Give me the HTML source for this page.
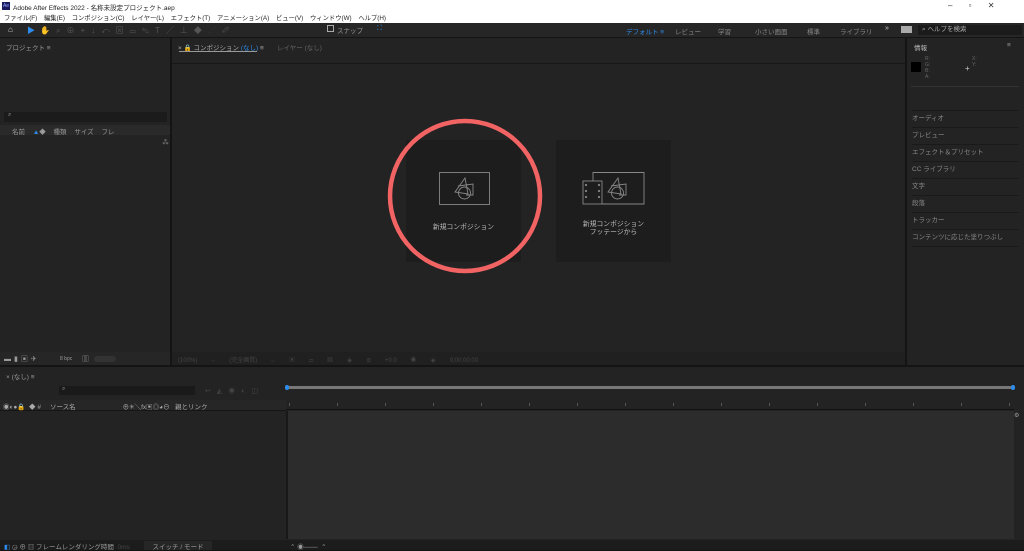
<!DOCTYPE html>
<html><head><meta charset="utf-8"><style>
*{margin:0;padding:0;box-sizing:border-box}
body{width:1024px;height:550px;overflow:hidden;background:#141414;font-family:"Liberation Sans","Noto Sans CJK JP",sans-serif;font-size:7px;color:#9a9a9a;position:relative}
.a{position:absolute}
.p{position:absolute;background:#232323}
</style></head><body>
<div class="a" style="left:0;top:0;width:1024px;height:23px;background:#fff"></div>
<div class="a" style="left:2px;top:2px;width:8px;height:8px;background:#1a1a5e;color:#9af;font-size:5px;line-height:8px;text-align:center">Ae</div>
<div class="a" style="left:13px;top:2px;color:#222;font-size:6.5px">Adobe After Effects 2022 - 名称未設定プロジェクト.aep</div>
<div class="a" style="left:4px;top:13px;color:#222;font-size:6.3px;word-spacing:5px">ファイル(F) 編集(E) コンポジション(C) レイヤー(L) エフェクト(T) アニメーション(A) ビュー(V) ウィンドウ(W) ヘルプ(H)</div>
<div class="a" style="left:948px;top:1px;color:#333;font-size:8px;word-spacing:14px">–  ▫  ✕</div>
<div class="a" style="left:0;top:23px;width:1024px;height:14px;background:#262626"></div>
<div class="a" style="left:8px;top:25px;color:#ccc;font-size:8px">⌂</div>
<div class="a" style="left:27px;top:25px;color:#2d8ceb;font-size:8px">▶</div>
<div class="a" style="left:40px;top:25px;color:#555;font-size:8px;letter-spacing:6px">✋⌕⊕+↓↶⊠▭✎T╱⊥◆⋰✐</div>
<div class="a" style="left:327px;top:25px;width:7px;height:7px;border:1px solid #aaa"></div>
<div class="a" style="left:337px;top:25px;color:#999;font-size:6.5px">スナップ</div>
<div class="a" style="left:377px;top:25px;color:#2d8ceb;font-size:7px">⛶</div>
<div class="a" style="left:626px;top:26px;color:#2d8ceb;font-size:6.5px">デフォルト ≡</div>
<div class="a" style="left:675px;top:26px;font-size:6.5px;color:#888">レビュー</div>
<div class="a" style="left:718px;top:26px;font-size:6.5px;color:#888">学習</div>
<div class="a" style="left:755px;top:26px;font-size:6.5px;color:#888">小さい画面</div>
<div class="a" style="left:807px;top:26px;font-size:6.5px;color:#888">標準</div>
<div class="a" style="left:840px;top:26px;font-size:6.5px;color:#888">ライブラリ</div>
<div class="a" style="left:885px;top:25px;font-size:7px;color:#ccc">»</div>
<div class="a" style="left:901px;top:26px;width:11px;height:7px;background:#aaa"></div>
<div class="a" style="left:918px;top:25px;width:104px;height:10px;background:#1b1b1b;color:#aaa;font-size:6.5px;padding-left:4px;line-height:10px">⌕ ヘルプを検索</div>
<!-- project -->
<div class="p" style="left:0;top:38px;width:170px;height:327px"></div>
<div class="a" style="left:6px;top:42px;font-size:6.5px">プロジェクト ≡</div>
<div class="a" style="left:4px;top:112px;width:163px;height:10px;background:#1b1b1b;font-size:6px;padding-left:4px">⌕</div>
<div class="a" style="left:0;top:125px;width:170px;height:10px;background:#2a2a2a"></div>
<div class="a" style="left:12px;top:126px;font-size:6.5px;word-spacing:6px">名前 <span style="color:#2d8ceb">▲</span>◆ 種類 サイズ フレ</div>
<div class="a" style="left:162px;top:137px;font-size:7px">⁂</div>
<div class="a" style="left:0;top:352px;width:170px;height:13px;background:#262626"></div>
<div class="a" style="left:4px;top:354px;font-size:7px;letter-spacing:3px">▬▮▣✈</div>
<div class="a" style="left:60px;top:356px;font-size:5px">8 bpc</div>
<div class="a" style="left:82px;top:354px;font-size:7px">▥</div>
<div class="a" style="left:94px;top:356px;width:22px;height:6px;border-radius:3px;background:#333"></div>
<!-- comp -->
<div class="p" style="left:172px;top:38px;width:733px;height:327px"></div>
<div class="a" style="left:172px;top:63px;width:733px;height:1px;background:#171717"></div>
<div class="a" style="left:178px;top:42px;font-size:6.5px;color:#aaa">× 🔒 コンポジション <span style="color:#2d8ceb">(なし)</span> ≡</div>
<div class="a" style="left:179px;top:51px;width:78px;height:1px;background:#999"></div>
<div class="a" style="left:277px;top:42px;font-size:6.5px;color:#666">レイヤー (なし)</div>
<div class="a" style="left:172px;top:352px;width:733px;height:13px;background:#202020"></div>
<div class="a" style="left:178px;top:355px;font-size:6px;color:#444;word-spacing:12px">(100%) ⌵ (完全画質) ⌵ ▣ ▭ ▦ ◈ ⚙ +0.0 ◉ ◈ 0;00;00;00</div>
<div class="a" style="left:406px;top:140px;width:115px;height:122px;background:#1d1d1d"></div>
<div class="a" style="left:556px;top:140px;width:115px;height:122px;background:#1d1d1d"></div>
<svg class="a" style="left:380px;top:120px;overflow:visible" width="300" height="170" viewBox="0 0 300 170" fill="none" stroke="#888" stroke-width="0.9">
<rect x="59.5" y="52.5" width="50" height="32"/><path d="M75 72 L85 58 L88 74 Z M78 66 L93 64 L93 75 L86 75"/><circle cx="84.5" cy="73" r="6"/>
<rect x="203" y="61" width="19" height="23"/><path d="M213 61 V52.5 H264 V84 H222"/><circle cx="206" cy="65" r=".7"/><circle cx="206" cy="71" r=".7"/><circle cx="206" cy="77" r=".7"/><circle cx="219" cy="65" r=".7"/><circle cx="219" cy="71" r=".7"/><circle cx="219" cy="77" r=".7"/>
<path d="M228 72 L238 58 L241 74 Z M231 66 L246 64 L246 75 L239 75"/><circle cx="237.5" cy="73" r="6"/>
<circle cx="85" cy="76" r="75" stroke="#f26364" stroke-width="4.5"/>
</svg>
<div class="a" style="left:406px;top:221px;width:115px;text-align:center;font-size:6.8px;color:#bbb">新規コンポジション</div>
<div class="a" style="left:556px;top:221px;width:115px;text-align:center;font-size:6.8px;color:#bbb;line-height:8px">新規コンポジション<br>フッテージから</div>
<!-- right -->
<div class="p" style="left:907px;top:38px;width:117px;height:327px"></div>
<div class="a" style="left:914px;top:42px;font-size:6.5px;color:#bbb">情報</div>
<div class="a" style="left:1007px;top:42px;font-size:6.5px">≡</div>
<div class="a" style="left:911px;top:62px;width:10px;height:10px;background:#000"></div>
<div class="a" style="left:925px;top:56px;font-size:5px;line-height:6px;color:#666">R:<br>G:<br>B:<br>A:</div>
<div class="a" style="left:972px;top:56px;font-size:5px;line-height:6px;color:#666">X:<br>Y:</div>
<div class="a" style="left:965px;top:64px;font-size:8px;color:#ccc">+</div>
<div class="a" style="left:911px;top:86px;width:108px;height:1px;background:#333"></div>
<div class="a" style="left:912px;top:110px;font-size:6.5px;line-height:16px;color:#888">
<div style="border-top:1px solid #1a1a1a;width:107px">オーディオ</div><div style="border-top:1px solid #1a1a1a">プレビュー</div><div style="border-top:1px solid #1a1a1a">エフェクト＆プリセット</div><div style="border-top:1px solid #1a1a1a">CC ライブラリ</div><div style="border-top:1px solid #1a1a1a">文字</div><div style="border-top:1px solid #1a1a1a">段落</div><div style="border-top:1px solid #1a1a1a">トラッカー</div><div style="border-top:1px solid #1a1a1a;border-bottom:1px solid #1a1a1a">コンテンツに応じた塗りつぶし</div></div>
<!-- timeline -->
<div class="p" style="left:0;top:367px;width:1024px;height:173px"></div>
<div class="a" style="left:6px;top:371px;font-size:6.5px">× (なし) ≡</div>
<div class="a" style="left:59px;top:386px;width:136px;height:9px;background:#1a1a1a;font-size:6px;padding-left:3px">⌕</div>
<div class="a" style="left:205px;top:386px;font-size:7px;color:#444;letter-spacing:6px">↩◭◉◐◫</div>
<div class="a" style="left:287px;top:386px;width:727px;height:3px;background:#777"></div>
<div class="a" style="left:285px;top:385px;width:4px;height:5px;background:#2d8ceb;border-radius:2px"></div>
<div class="a" style="left:1011px;top:385px;width:4px;height:5px;background:#2d8ceb;border-radius:2px"></div>
<div class="a" style="left:0;top:400px;width:286px;height:11px;background:#262626;border-bottom:1px solid #151515"></div>
<div class="a" style="left:3px;top:401px;font-size:6.5px;color:#aaa;white-space:pre">◉◐●🔒  ◆ #     ソース名                          ⊕✳╲fx▣◎◕⊖   親とリンク</div>
<div class="a" style="left:286px;top:398px;width:728px;height:12px;border-bottom:1px solid #111;background:repeating-linear-gradient(90deg,#555 0 1px,transparent 1px 48px);background-size:48px 3px;background-repeat:repeat-x;background-position:3px 5px"></div>
<div class="a" style="left:288px;top:411px;width:726px;height:128px;background:#2c2c2c"></div>
<div class="a" style="left:286px;top:411px;width:2px;height:128px;background:#181818"></div>
<div class="a" style="left:1014px;top:412px;font-size:6px">⚙</div>
<div class="a" style="left:0;top:540px;width:1024px;height:10px;background:#1c1c1c"></div>
<div class="a" style="left:4px;top:541px;font-size:6.5px;white-space:pre"><span style="color:#2d8ceb">◧</span> ◶ ⊕ ▥ フレームレンダリング時間  <span style="color:#444">0ms</span></div>
<div class="a" style="left:144px;top:541px;width:68px;height:9px;background:#262626;font-size:6.5px;text-align:center">スイッチ / モード</div>
<div class="a" style="left:290px;top:541px;font-size:6.5px;white-space:pre">⌃ ◉───  ⌃</div>
</body></html>
